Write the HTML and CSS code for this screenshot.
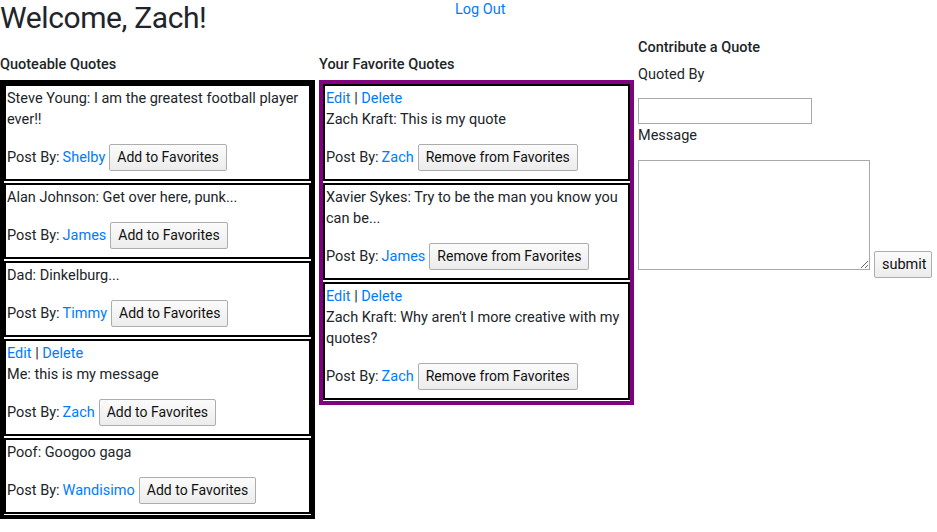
FILE: index.html
```html
<!DOCTYPE html>
<html lang="en">
<head>
<meta charset="utf-8">
<title>Quotes</title>
<link rel="stylesheet" href="styles.css">
</head>
<body>
<header class="top">
  <h1 class="welcome">Welcome, Zach!</h1>
  <a class="logout" href="#">Log Out</a>
</header>
<main class="columns">
  <section class="col col-list">
    <h6 class="col-title">Quoteable Quotes</h6>
    <div class="quote-box box-black">
      <div class="card">
        <p class="quote">Steve Young: I am the greatest football player ever!!</p>
        <div class="post"><span>Post By:</span><a href="#">Shelby</a><button class="btn">Add to Favorites</button></div>
      </div>
      <div class="card">
        <p class="quote">Alan Johnson: Get over here, punk...</p>
        <div class="post"><span>Post By:</span><a href="#">James</a><button class="btn">Add to Favorites</button></div>
      </div>
      <div class="card">
        <p class="quote">Dad: Dinkelburg...</p>
        <div class="post"><span>Post By:</span><a href="#">Timmy</a><button class="btn">Add to Favorites</button></div>
      </div>
      <div class="card">
        <div class="actions"><a href="#">Edit</a> | <a href="#">Delete</a></div>
        <p class="quote">Me: this is my message</p>
        <div class="post"><span>Post By:</span><a href="#">Zach</a><button class="btn">Add to Favorites</button></div>
      </div>
      <div class="card">
        <p class="quote">Poof: Googoo gaga</p>
        <div class="post"><span>Post By:</span><a href="#">Wandisimo</a><button class="btn">Add to Favorites</button></div>
      </div>
    </div>
  </section>
  <section class="col col-list">
    <h6 class="col-title">Your Favorite Quotes</h6>
    <div class="quote-box box-purple">
      <div class="card">
        <div class="actions"><a href="#">Edit</a> | <a href="#">Delete</a></div>
        <p class="quote">Zach Kraft: This is my quote</p>
        <div class="post"><span>Post By:</span><a href="#">Zach</a><button class="btn">Remove from Favorites</button></div>
      </div>
      <div class="card">
        <p class="quote">Xavier Sykes: Try to be the man you know you can be...</p>
        <div class="post"><span>Post By:</span><a href="#">James</a><button class="btn">Remove from Favorites</button></div>
      </div>
      <div class="card">
        <div class="actions"><a href="#">Edit</a> | <a href="#">Delete</a></div>
        <p class="quote">Zach Kraft: Why aren't I more creative with my quotes?</p>
        <div class="post"><span>Post By:</span><a href="#">Zach</a><button class="btn">Remove from Favorites</button></div>
      </div>
    </div>
  </section>
  <section class="col col-form">
    <h6 class="col-title">Contribute a Quote</h6>
    <form class="contribute">
      <label class="field-label" for="by">Quoted By</label>
      <input class="text-input" id="by" type="text">
      <label class="field-label field-label-msg" for="msg">Message</label>
      <div class="msg-row">
        <textarea class="text-area" id="msg"></textarea>
        <button class="btn submit" type="button">submit</button>
      </div>
    </form>
  </section>
</main>
</body>
</html>
```

FILE: styles.css
```css
html, body {
  margin: 0;
  padding: 0;
}
body {
  font-family: Roboto, "Segoe UI", "Liberation Sans", sans-serif;
  font-size: 14.5px;
  line-height: 21px;
  color: #212529;
  background: #fff;
}
a {
  color: #007bff;
  text-decoration: none;
}
.top {
  display: flex;
  align-items: flex-start;
  height: 39px;
}
.welcome {
  flex: 0 0 455px;
  margin: 0;
  font-size: 30px;
  line-height: 35px;
  font-weight: 400;
  letter-spacing: -0.4px;
}
.logout {
  margin-top: -1px;
}
.columns {
  display: flex;
  align-items: flex-start;
  gap: 4px;
}
.col {
  width: 315px;
  flex: 0 0 315px;
}
.col-list {
  padding-top: 17px;
}
.col-form {
  flex: 1 1 auto;
  width: auto;
}
.col-title {
  margin: 0 0 7px;
  font-size: 14.5px;
  line-height: 17px;
  font-weight: 500;
}
.quote-box {
  border: 4px solid #000;
  padding-bottom: 1px;
  display: flex;
  flex-direction: column;
  gap: 2px;
}
.box-purple {
  border-color: #800080;
}
.card {
  border: 2px solid #000;
  padding: 2px 1px 8px;
}
.quote {
  margin: 0 0 14px;
}
.actions {
  color: #212529;
}
.post {
  display: flex;
  align-items: center;
  height: 27px;
}
.post a {
  margin-left: 3px;
}
.post .btn {
  margin-left: 4px;
}
.btn {
  font-family: inherit;
  font-size: 14px;
  line-height: 21px;
  color: #111;
  height: 27px;
  padding: 0 7px;
  border: 1px solid #adadad;
  border-radius: 2px;
  background: linear-gradient(#fbfbfb, #ececec);
}
.contribute {
  margin: 0;
}
.field-label {
  display: block;
  padding-top: 1px;
  margin-bottom: 13px;
}
.field-label-msg {
  margin-bottom: 14px;
}
.text-input {
  display: block;
  box-sizing: border-box;
  width: 174px;
  height: 26px;
  margin: 0;
  border: 1px solid #a9a9a9;
  padding: 1px 2px;
}
.msg-row {
  display: flex;
  align-items: flex-end;
  gap: 4px;
}
.text-area {
  box-sizing: border-box;
  width: 232px;
  height: 110px;
  margin: 0;
  border: 1px solid #a9a9a9;
  padding: 2px;
  font-family: inherit;
}
.submit {
  margin-bottom: -8px;
  padding: 0 7px;
  width: 58px;
  font-size: 14.5px;
}
```
